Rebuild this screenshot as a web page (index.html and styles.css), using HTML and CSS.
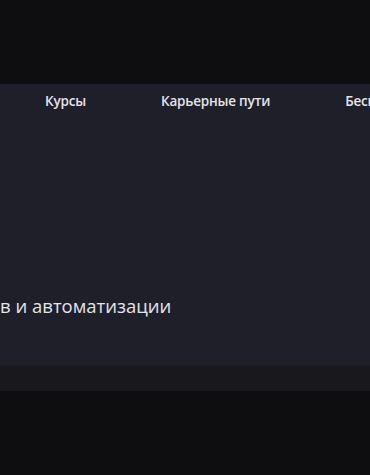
FILE: index.html
```html
<!DOCTYPE html>
<html lang="ru">
<head>
    <meta charset="UTF-8">
    <meta name="viewport" content="width=device-width, initial-scale=1.0">
    <title>Курсы</title>
    <link rel="stylesheet" href="styles.css">
</head>
<body>
    <div class="top-bar"></div>
    <section class="hero">
        <nav class="nav">
            <a href="#">Курсы</a>
            <a href="#">Карьерные пути</a>
            <a href="#">Бесплатные уроки</a>
        </nav>
        <h1 class="hero-title">в и автоматизации</h1>
    </section>
    <div class="hero-strip"></div>
</body>
</html>
```

FILE: styles.css
```css
body {
    margin: 0;
    background-color: #0e0e10;
    font-family: 'Open Sans', sans-serif;
    color: #e4e4e8;
    overflow: hidden;
}
.top-bar {
    height: 84px;
}
.hero {
    height: 282px;
    background-color: #1f1f29;
    display: flex;
    flex-direction: column;
}
.nav {
    display: flex;
    gap: 75px;
    padding: 0 0 0 45px;
    height: 34px;
    align-items: center;
    white-space: nowrap;
    overflow: hidden;
}
.nav a {
    color: #e4e4e8;
    text-decoration: none;
    font-size: 13.5px;
    font-weight: 600;
    letter-spacing: -0.2px;
}
.hero-title {
    margin: 176px 0 0 0;
    font-size: 18.5px;
    font-weight: 500;
    line-height: 24px;
    white-space: nowrap;
}
.hero-strip {
    height: 25px;
    background-color: #18181d;
}
```
